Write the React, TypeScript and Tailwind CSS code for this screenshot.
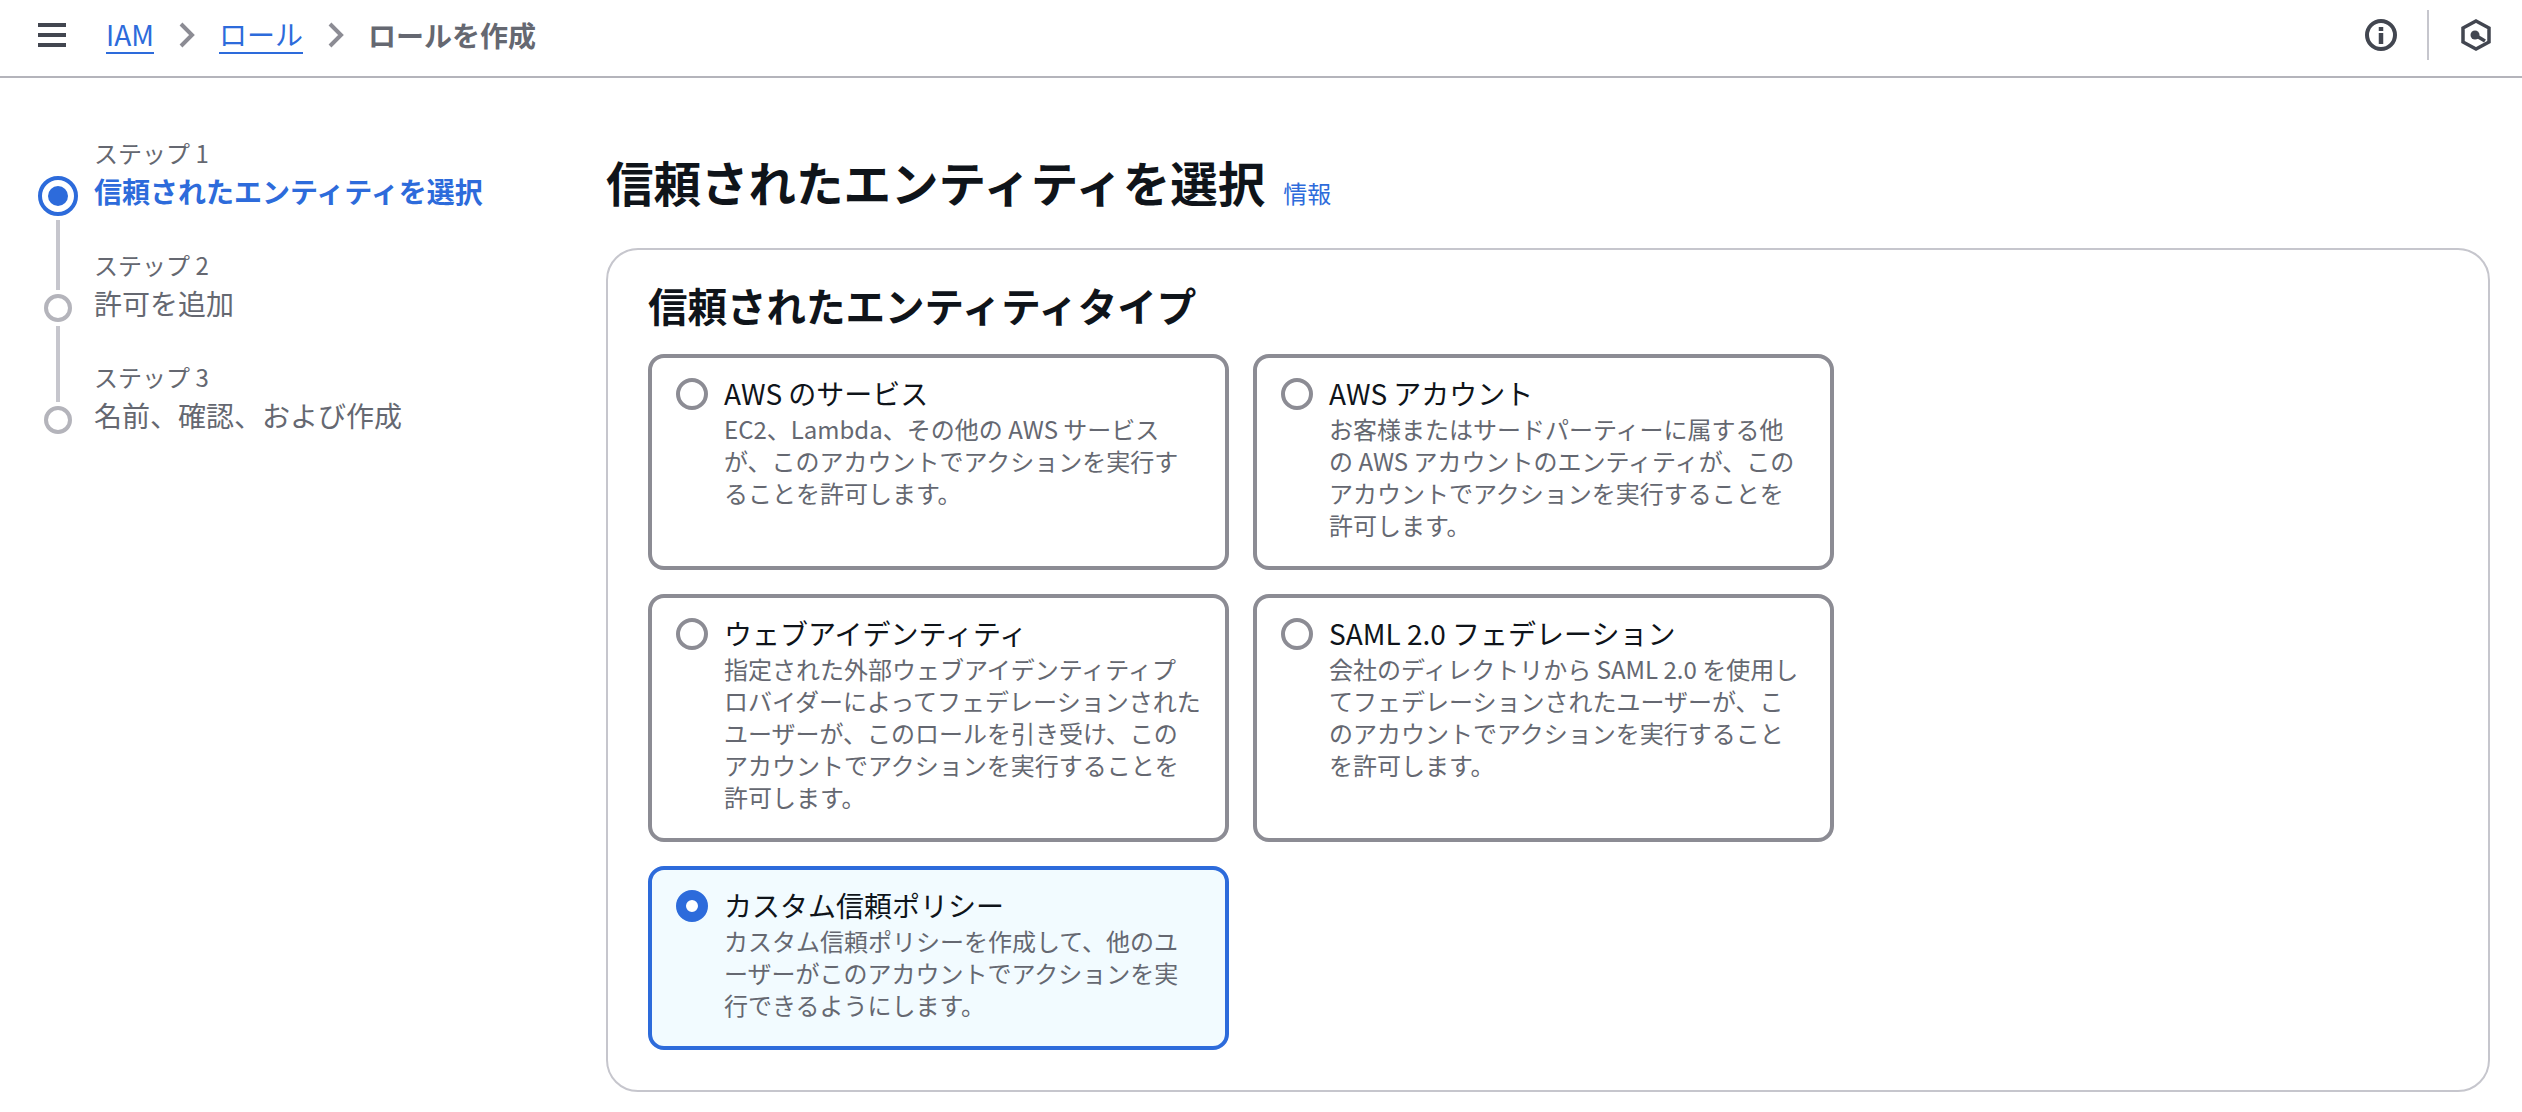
import React from "react";

const FONT = `"Noto Sans CJK JP", "Noto Sans", sans-serif`;

const options = [
  {
    title: "AWS のサービス",
    lines: ["EC2、Lambda、その他の AWS サービス", "が、このアカウントでアクションを実行す", "ることを許可します。"],
  },
  {
    title: "AWS アカウント",
    lines: [
      "お客様またはサードパーティーに属する他",
      "の AWS アカウントのエンティティが、この",
      "アカウントでアクションを実行することを",
      "許可します。",
    ],
  },
  {
    title: "ウェブアイデンティティ",
    lines: [
      "指定された外部ウェブアイデンティティプ",
      "ロバイダーによってフェデレーションされた",
      "ユーザーが、このロールを引き受け、この",
      "アカウントでアクションを実行することを",
      "許可します。",
    ],
  },
  {
    title: "SAML 2.0 フェデレーション",
    lines: [
      "会社のディレクトリから SAML 2.0 を使用し",
      "てフェデレーションされたユーザーが、こ",
      "のアカウントでアクションを実行すること",
      "を許可します。",
    ],
  },
  {
    title: "カスタム信頼ポリシー",
    lines: ["カスタム信頼ポリシーを作成して、他のユ", "ーザーがこのアカウントでアクションを実", "行できるようにします。"],
    selected: true,
  },
];

const steps = [
  { label: "ステップ 1", title: "信頼されたエンティティを選択", active: true },
  { label: "ステップ 2", title: "許可を追加" },
  { label: "ステップ 3", title: "名前、確認、および作成" },
];

const Chevron = () => (
  <svg width="16" height="26" viewBox="0 0 16 26" fill="none" className="ml-[25px] mr-[24px]">
    <path d="M2 2l11 11L2 24" stroke="#8c8c94" strokeWidth="4" />
  </svg>
);

const Header = () => (
  <header className="flex h-[78px] items-center border-b-2 border-[#b4b4bb] pb-[6px] pl-[38px] pr-[31px]">
    <svg width="28" height="24" viewBox="0 0 28 24" className="mr-[40px]">
      <path d="M0 2h28M0 12h28M0 22h28" stroke="#424650" strokeWidth="4" />
    </svg>
    <a className="border-b-2 border-[#2d6bdb] text-[28px] leading-[36px] text-[#2d6bdb]">IAM</a>
    <Chevron />
    <a className="border-b-2 border-[#2d6bdb] text-[28px] leading-[36px] text-[#2d6bdb]">ロール</a>
    <Chevron />
    <span className="text-[28px] font-bold leading-[36px] text-[#656871]">ロールを作成</span>
    <div className="ml-auto flex items-center">
      <svg width="32" height="32" viewBox="0 0 32 32" fill="none">
        <circle cx="16" cy="16" r="14" stroke="#424650" strokeWidth="4" />
        <path d="M16 14v11" stroke="#424650" strokeWidth="4.500" />
        <path d="M16 8v4" stroke="#424650" strokeWidth="4.500" />
      </svg>
      <div className="ml-[30px] mr-[32px] h-[50px] w-[2px] bg-[#c6c6cd]" />
      <svg width="30" height="32" viewBox="0 0 30 32" fill="none">
        <path d="M15 2l13 7v14l-13 7-13-7V9z" stroke="#424650" strokeWidth="3.500" />
        <circle cx="14" cy="16" r="4.500" fill="#424650" />
        <path d="M14 16l10 6" stroke="#424650" strokeWidth="3.500" />
      </svg>
    </div>
  </header>
);

const StepNav = () => (
  <nav className="w-[606px] shrink-0 pl-[38px] pt-[57px]">
    {steps.map((s, i) => (
      <div key={s.label} className="relative h-[112px]">
        <div className="pl-[56px] text-[24px] leading-[36px] text-[#656871]">{s.label}</div>
        <div
          className={
            s.active
              ? "pl-[56px] text-[28px] font-bold leading-[40px] text-[#2d6bdb]"
              : "pl-[56px] text-[28px] leading-[40px] text-[#656871]"
          }
        >
          {s.title}
        </div>
        {/* marker and rail sit beside the text, not in the flow */}
        {s.active ? (
          <div className="absolute left-0 top-[41px] flex h-[40px] w-[40px] items-center justify-center rounded-full border-4 border-[#2d6bdb]">
            <div className="h-[20px] w-[20px] rounded-full bg-[#2d6bdb]" />
          </div>
        ) : (
          <div className="absolute left-[6px] top-[47px] h-[28px] w-[28px] rounded-full border-4 border-[#b4b4bb]" />
        )}
        {i < steps.length - 1 && (
          <div
            className={
              s.active
                ? "absolute left-[18px] top-[85px] h-[70px] w-[4px] bg-[#c6c6cd]"
                : "absolute left-[18px] top-[79px] h-[76px] w-[4px] bg-[#c6c6cd]"
            }
          />
        )}
      </div>
    ))}
  </nav>
);

const OptionCard = ({ title, lines, selected }: { title: string; lines: string[]; selected?: boolean }) => (
  <div
    className={
      selected
        ? "flex rounded-[16px] border-4 border-[#2d6bdb] bg-[#f2fbff] pb-[25px] pl-[24px] pr-[16px] pt-[16px]"
        : "flex rounded-[16px] border-4 border-[#8c8c94] bg-white pb-[25px] pl-[24px] pr-[16px] pt-[16px]"
    }
  >
    {selected ? (
      <div className="mt-[4px] h-[32px] w-[32px] shrink-0 rounded-full border-[10px] border-[#2d6bdb] bg-white" />
    ) : (
      <div className="mt-[4px] h-[32px] w-[32px] shrink-0 rounded-full border-4 border-[#8c8c94] bg-white" />
    )}
    <div className="ml-[16px]">
      <div className="text-[28px] leading-[39px] text-[#0f141a]">{title}</div>
      {lines.map((l) => (
        <div key={l} className="whitespace-nowrap text-[24px] leading-[32px] text-[#656871]">
          {l}
        </div>
      ))}
    </div>
  </div>
);

export default function App() {
  return (
    <div className="h-screen overflow-hidden bg-white" style={{ fontFamily: FONT }}>
      <Header />
      <div className="flex">
        <StepNav />
        <main className="flex-1 pr-[32px] pt-[72px]">
          <div className="flex h-[64px] items-center">
            <h1 className="text-[47.5px] font-bold leading-[64px] text-[#0f141a]">信頼されたエンティティを選択</h1>
            <a className="ml-[18px] mt-[22px] text-[24px] leading-[32px] text-[#2d6bdb]">情報</a>
          </div>
          <section className="mt-[34px] rounded-[32px] border-2 border-[#c6c6cd] px-[40px] pb-[40px] pt-[27px]">
            <h2 className="text-[39.5px] font-bold leading-[56px] text-[#0f141a]">信頼されたエンティティタイプ</h2>
            <div className="mt-[21px] grid w-[1186px] grid-cols-2 gap-[24px]">
              {options.map((o) => (
                <OptionCard key={o.title} title={o.title} lines={o.lines} selected={o.selected} />
              ))}
            </div>
          </section>
        </main>
      </div>
    </div>
  );
}
